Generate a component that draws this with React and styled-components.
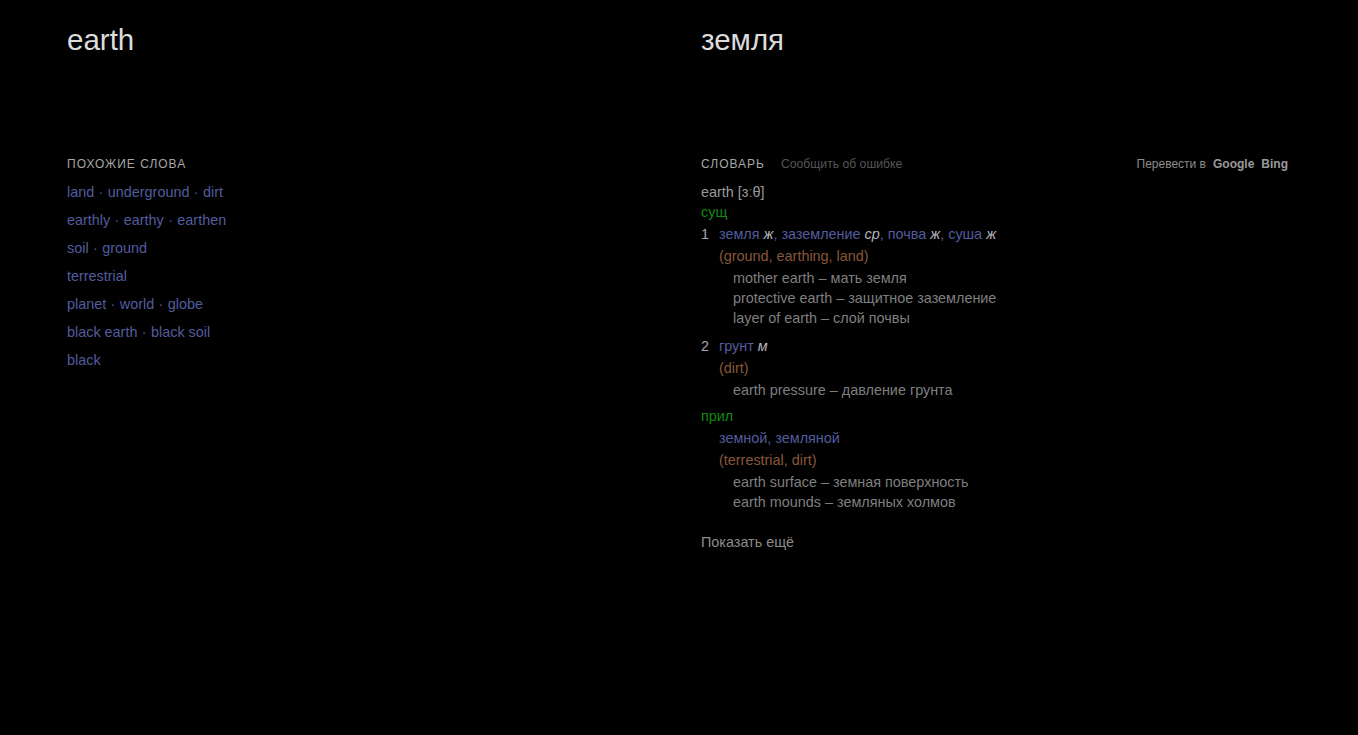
import React from "react";
import styled, { createGlobalStyle } from "styled-components";

const Global = createGlobalStyle`
  html, body { margin: 0; padding: 0; background: #000; }
  body { font-family: "Liberation Sans", Arial, sans-serif; color: #ccc; }
  * { box-sizing: border-box; }
`;

const Page = styled.div`
  min-height: 735px;
  background: #000;
  padding: 0 70px 0 67px;
  display: grid;
  grid-template-columns: 634px 1fr;
`;

const Column = styled.div`
  display: flex;
  flex-direction: column;
`;

const Title = styled.div`
  font-size: 29.5px;
  color: #dcdcdc;
  height: 40px;
  line-height: 40px;
  margin-top: 20px;
  margin-bottom: 96px;
`;

const SectionHead = styled.div`
  display: flex;
  align-items: baseline;
  height: 16px;
  line-height: 16px;
  margin-bottom: 12px;
`;

const Caps = styled.span`
  font-size: 12px;
  letter-spacing: 1px;
  text-transform: uppercase;
  color: ${(p) => p.$color || "#a9a9a9"};
`;

const Muted = styled.span`
  font-size: 12.2px;
  color: #575757;
  margin-left: 16px;
`;

const Spacer = styled.div`
  flex: 1;
`;

const TranslateIn = styled.span`
  font-size: 12px;
  color: #8c8c8c;
  display: flex;
  gap: 7px;
`;

const Strong = styled.b`
  font-weight: bold;
  color: #9a9a9a;
`;

const SimilarRow = styled.div`
  font-size: 14.4px;
  height: 28px;
  line-height: 16px;
  color: #525c9e;
`;

const Dot = styled.span`
  color: #525c9e;
  margin: 0 4.4px;
`;

const Line = styled.div`
  font-size: 14.4px;
  line-height: 16px;
  height: ${(p) => p.$h || 22}px;
  padding-left: ${(p) => p.$indent || 0}px;
  color: ${(p) => p.$color || "#8a8a8a"};
  display: flex;
`;

const Num = styled.span`
  width: 18px;
  color: #a5a7b5;
`;

const Link = styled.span`
  color: #525c9e;
`;

const Gender = styled.i`
  color: #b3b3bc;
`;

const similar = [
  ["land", "underground", "dirt"],
  ["earthly", "earthy", "earthen"],
  ["soil", "ground"],
  ["terrestrial"],
  ["planet", "world", "globe"],
  ["black earth", "black soil"],
  ["black"],
];

const GREEN = "#128a12";
const BROWN = "#89573a";
const EX = "#7f7f7f";

export default function App() {
  return (
    <>
      <Global />
      <Page>
        <Column>
          <Title>earth</Title>
          <SectionHead>
            <Caps $color="#a6a6a6">Похожие слова</Caps>
          </SectionHead>
          {similar.map((row, i) => (
            <SimilarRow key={i}>
              {row.map((w, j) => (
                <React.Fragment key={w}>
                  {j > 0 && <Dot>·</Dot>}
                  {w}
                </React.Fragment>
              ))}
            </SimilarRow>
          ))}
        </Column>
        <Column>
          <Title>земля</Title>
          <SectionHead>
            <Caps>Словарь</Caps>
            <Muted>Сообщить об ошибке</Muted>
            <Spacer />
            <TranslateIn>
              Перевести в <Strong>Google</Strong> <Strong>Bing</Strong>
            </TranslateIn>
          </SectionHead>
          <Line $h={20} $color="#9a9a9a">earth [ɜːθ]</Line>
          <Line $color={GREEN}>сущ</Line>
          <Line>
            <Num>1</Num>
            <span>
              <Link>земля</Link> <Gender>ж</Gender><Link>, заземление</Link> <Gender>ср</Gender>
              <Link>, почва</Link> <Gender>ж</Gender><Link>, суша</Link> <Gender>ж</Gender>
            </span>
          </Line>
          <Line $indent={18} $color={BROWN}>(ground, earthing, land)</Line>
          <Line $indent={32} $h={20} $color={EX}>mother earth – мать земля</Line>
          <Line $indent={32} $h={20} $color={EX}>protective earth – защитное заземление</Line>
          <Line $indent={32} $h={28} $color={EX}>layer of earth – слой почвы</Line>
          <Line>
            <Num>2</Num>
            <span>
              <Link>грунт</Link> <Gender>м</Gender>
            </span>
          </Line>
          <Line $indent={18} $color={BROWN}>(dirt)</Line>
          <Line $indent={32} $h={26} $color={EX}>earth pressure – давление грунта</Line>
          <Line $color={GREEN}>прил</Line>
          <Line $indent={18}>
            <Link>земной, земляной</Link>
          </Line>
          <Line $indent={18} $color={BROWN}>(terrestrial, dirt)</Line>
          <Line $indent={32} $h={20} $color={EX}>earth surface – земная поверхность</Line>
          <Line $indent={32} $h={40} $color={EX}>earth mounds – земляных холмов</Line>
          <Line $color="#8c8c8c">Показать ещё</Line>
        </Column>
      </Page>
    </>
  );
}
